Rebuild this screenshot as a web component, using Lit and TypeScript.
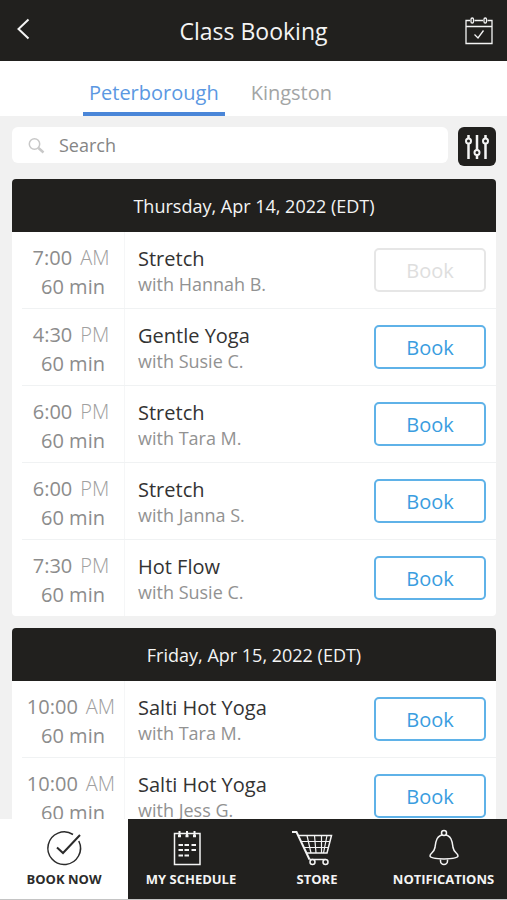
import { LitElement, html, css, svg } from "lit";
import { customElement, property, state } from "lit/decorators.js";
import { classMap } from "lit/directives/class-map.js";

interface Session {
  time: string;
  period: string;
  name: string;
  teacher: string;
  full?: boolean;
}

interface Day {
  label: string;
  sessions: Session[];
}

const LOCATIONS = ["Peterborough", "Kingston"];

const DAYS: Day[] = [
  {
    label: "Thursday, Apr 14, 2022 (EDT)",
    sessions: [
      { time: "7:00", period: "AM", name: "Stretch", teacher: "Hannah B.", full: true },
      { time: "4:30", period: "PM", name: "Gentle Yoga", teacher: "Susie C." },
      { time: "6:00", period: "PM", name: "Stretch", teacher: "Tara M." },
      { time: "6:00", period: "PM", name: "Stretch", teacher: "Janna S." },
      { time: "7:30", period: "PM", name: "Hot Flow", teacher: "Susie C." },
    ],
  },
  {
    label: "Friday, Apr 15, 2022 (EDT)",
    sessions: [
      { time: "10:00", period: "AM", name: "Salti Hot Yoga", teacher: "Tara M." },
      { time: "10:00", period: "AM", name: "Salti Hot Yoga", teacher: "Jess G." },
    ],
  },
];

const bookIcon = svg`
  <path d="M29 5.500A16.300 16.300 0 1 0 34.800 12" />
  <path d="M13 18.500L19 24L36 6" stroke-width="2" />`;

const scheduleIcon = svg`
  <rect x="3.500" y="4.500" width="25.500" height="31" />
  <path d="M8.500 2v5.500M16 2v5.500M23.500 2v5.500" stroke-width="2" />
  <path d="M7 7h3M14.500 7h3M22 7h3" stroke-width="2.500" />
  <path d="M7.500 16h4.500M13.500 16h4.500M20.500 16h4.500M7.500 21h4.500M13.500 21h4.500M20.500 21h4.500M7.500 26.500h4.500M13.500 26.500h4.500" stroke-width="2" />`;

const cartIcon = svg`
  <path d="M0 3h4.500L17.500 30.500" stroke-width="2" />
  <path d="M6.500 6.500H39.500L35 24H14.500" />
  <path d="M9.500 12.500H38M12 18.500H36.500M15 6.500l4 17.500M22.500 6.500l1.500 17.500M29.500 6.500V24M35 6.500L31.500 24" stroke-width="1.200" />
  <path d="M17.500 30.500h16" />
  <circle cx="20.500" cy="33" r="2.500" fill="#21201e" />
  <circle cx="33.500" cy="33" r="2.500" fill="#21201e" />`;

const bellIcon = svg`
  <path d="M6 27C6 24 10 24 11 18.500C11.800 13 12 6.500 20 5.500C28 6.500 28.200 13 29 18.500C30 24 34 24 34 27Q34 29.500 20 30Q6 29.500 6 27Z" />
  <circle cx="20" cy="4" r="2.500" fill="#21201e" />
  <path d="M16.500 30.500v1.500a3.500 3.500 0 0 0 7 0v-1.500" />`;

const NAV = [
  { label: "BOOK NOW", icon: bookIcon, box: "0 0 40 38" },
  { label: "MY SCHEDULE", icon: scheduleIcon, box: "0 0 40 38" },
  { label: "STORE", icon: cartIcon, box: "5 0 40 38" },
  { label: "NOTIFICATIONS", icon: bellIcon, box: "0 0 40 38" },
];

@customElement("day-card")
class DayCard extends LitElement {
  @property({ attribute: false }) day!: Day;

  static styles = css`
    :host {
      display: block;
      flex: none;
      background: #fff;
      border-radius: 4px;
      overflow: hidden;
    }
    .heading {
      margin: 0;
      padding: 15px 0 14px;
      background: #21201e;
      color: #f4f4f4;
      font-size: 18px;
      font-weight: 400;
      line-height: 24px;
      text-align: center;
    }
    .list {
      margin: 0;
      padding: 0;
      list-style: none;
    }
    .row {
      display: flex;
      height: 76px;
      margin-left: 10px;
    }
    .row + .row {
      border-top: 1px solid #f0f2f3;
    }
    .when {
      box-sizing: border-box;
      width: 103px;
      padding-top: 11px;
      border-right: 1px solid #f5f6f7;
      color: #8c8c8c;
      font-size: 20px;
      line-height: 29px;
      text-align: center;
      white-space: nowrap;
    }
    .period {
      margin: 0 4px 0 8px;
      color: #a0a0a0;
      font-weight: 300;
    }
    .what {
      flex: 1;
      padding: 14px 0 0 13px;
    }
    .name {
      color: #333;
      font-size: 20px;
      line-height: 26px;
    }
    .teacher {
      color: #929292;
      font-size: 18px;
      line-height: 24px;
    }
    .book {
      box-sizing: border-box;
      width: 112px;
      height: 44px;
      margin: 16px 10px 0 0;
      padding: 2px 0 0;
      border: 2px solid #5fb2e8;
      border-radius: 5px;
      background: #fff;
      color: #3a9de0;
      font: inherit;
      font-size: 20px;
      line-height: 24px;
    }
    .book:disabled {
      border-color: #e6e6e6;
      color: #dedede;
    }
  `;

  render() {
    return html`
      <h2 class="heading">${this.day.label}</h2>
      <ul class="list">
        ${this.day.sessions.map(
          (s) => html`
            <li class="row">
              <div class="when">
                <div>${s.time}<span class="period">${s.period}</span></div>
                <div>60 min</div>
              </div>
              <div class="what">
                <div class="name">${s.name}</div>
                <div class="teacher">with ${s.teacher}</div>
              </div>
              <button class="book" ?disabled=${s.full}>Book</button>
            </li>
          `,
        )}
      </ul>
    `;
  }
}

@customElement("app-root")
class AppRoot extends LitElement {
  @state() location = LOCATIONS[0];

  static styles = css`
    :host {
      display: flex;
      flex-direction: column;
      height: 100vh;
      background: #f1f1f1;
      font-family: "Open Sans", "Noto Sans", sans-serif;
    }
    svg {
      display: block;
      overflow: visible;
      fill: none;
      stroke: currentColor;
    }
    button {
      padding: 0;
      border: 0;
      background: none;
      color: inherit;
      font: inherit;
    }
    .header {
      display: grid;
      grid-template-columns: 48px 1fr 48px;
      align-items: center;
      flex: none;
      height: 61px;
      background: #21201e;
      color: #f4f4f4;
    }
    .back {
      padding: 0 0 4px 16px;
    }
    .calendar {
      padding-left: 6px;
    }
    .title {
      margin: 0;
      font-size: 23px;
      font-weight: 400;
      line-height: 32px;
      text-align: center;
    }
    .tabs {
      display: flex;
      flex: none;
      gap: 20px;
      height: 55px;
      padding-left: 83px;
      background: #fff;
    }
    .tab {
      padding: 12px 6px 0;
      border-bottom: 4px solid transparent;
      color: #a3a5a5;
      font-size: 20px;
      line-height: 28px;
    }
    .tab.active {
      border-color: #4a86d8;
      color: #5b98e2;
    }
    .content {
      display: flex;
      flex: 1;
      flex-direction: column;
      gap: 12px;
      min-height: 0;
      padding: 11px 11px 0 12px;
      overflow-y: auto;
      scrollbar-width: none;
    }
    .tools {
      display: flex;
      flex: none;
      align-items: flex-start;
      gap: 10px;
      height: 40px;
    }
    .search {
      display: flex;
      flex: 1;
      align-items: center;
      gap: 14px;
      height: 36px;
      padding-left: 16px;
      border-radius: 6px;
      background: #fff;
      color: #c8c8c8;
    }
    .field {
      flex: 1;
      min-width: 0;
      padding: 0;
      border: 0;
      outline: 0;
      background: none;
      color: #333;
      font: inherit;
      font-size: 18px;
      line-height: 24px;
    }
    .field::placeholder {
      color: #858585;
      opacity: 1;
    }
    .filter {
      display: grid;
      place-items: center;
      width: 38px;
      height: 39px;
      border-radius: 6px;
      background: #21201e;
      color: #f4f4f4;
    }
    .nav {
      display: grid;
      grid-template-columns: 128fr 126fr 126fr 127fr;
      flex: none;
      height: 80px;
      border-bottom: 1px solid #c4c4c4;
      background: #21201e;
    }
    .item {
      display: flex;
      flex-direction: column;
      align-items: center;
      gap: 3px;
      padding-top: 10px;
      color: #f4f4f4;
      font-size: 13px;
      font-weight: 700;
      line-height: 18px;
      text-decoration: none;
      white-space: nowrap;
    }
    .item.active {
      background: #fff;
      color: #2b2b2b;
    }
  `;

  render() {
    return html`
      <header class="header">
        <button class="back" aria-label="Back">
          <svg width="14" height="22" viewBox="0 0 14 22" stroke-width="2">
            <path d="M12.500 1.500L2.500 11L12.500 20.500" />
          </svg>
        </button>
        <h1 class="title">Class Booking</h1>
        <button class="calendar" aria-label="My calendar">
          <svg width="28" height="28" viewBox="0 0 28 28" stroke-width="1.300">
            <path d="M5 3.500H1V26.500H27V3.500H22.500M9.500 3.500H18M1 9.500H27" />
            <rect x="6" y="1" width="2.500" height="5" rx="1.200" />
            <rect x="19" y="1" width="2.500" height="5" rx="1.200" />
            <path d="M9.500 17.500L13 21L18.500 13.500" />
          </svg>
        </button>
      </header>
      <nav class="tabs" aria-label="Locations">
        ${LOCATIONS.map(
          (name) => html`
            <button
              class=${classMap({ tab: true, active: name === this.location })}
              @click=${() => (this.location = name)}
            >${name}</button>
          `,
        )}
      </nav>
      <main class="content">
        <div class="tools">
          <label class="search">
            <svg width="17" height="17" viewBox="0 0 17 17" stroke-width="1.500">
              <circle cx="6.500" cy="7" r="5.200" />
              <path d="M10.500 11L15.500 15.500" stroke-width="2.500" />
            </svg>
            <input class="field" type="text" placeholder="Search" aria-label="Search" />
          </label>
          <button class="filter" aria-label="Filters">
            <svg width="26" height="26" viewBox="0 0 26 26" stroke-width="2.500">
              <path d="M4.500 1V5M4.500 9.500V25M13 1V16M13 21V25M21.500 1V5M21.500 9.500V25" />
              <g stroke-width="2">
                <circle cx="4.500" cy="7" r="2.500" />
                <circle cx="13" cy="18.500" r="2.500" />
                <circle cx="21.500" cy="7" r="2.500" />
              </g>
            </svg>
          </button>
        </div>
        ${DAYS.map((day) => html`<day-card .day=${day}></day-card>`)}
      </main>
      <nav class="nav" aria-label="Main">
        ${NAV.map(
          (item, i) => html`
            <a class=${classMap({ item: true, active: i === 0 })} href="#">
              <svg width="40" height="38" viewBox=${item.box} stroke-width="1.500">
                ${item.icon}
              </svg>
              ${item.label}
            </a>
          `,
        )}
      </nav>
    `;
  }
}
